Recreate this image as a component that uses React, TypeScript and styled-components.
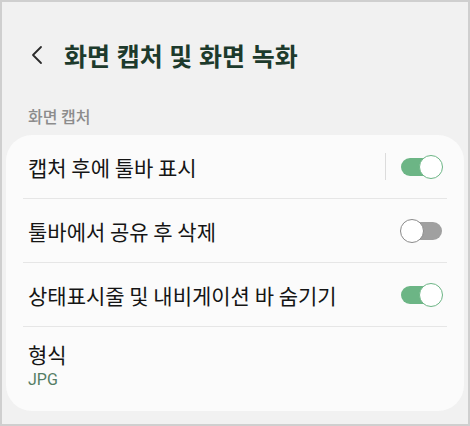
import { type FC } from "react";
import styled, { createGlobalStyle } from "styled-components";

const GlobalStyle = createGlobalStyle`
  html, body {
    margin: 0;
    padding: 0;
    background: #f1f1f1;
  }
  * {
    box-sizing: border-box;
  }
`;

type SwitchRow = {
  label: string;
  on: boolean;
  divider?: boolean;
};

const rows: SwitchRow[] = [
  { label: "캡처 후에 툴바 표시", on: true, divider: true },
  { label: "툴바에서 공유 후 삭제", on: false },
  { label: "상태표시줄 및 내비게이션 바 숨기기", on: true },
];

const App: FC = () => {
  return (
    <>
      <GlobalStyle />
      <Frame>
        <Header>
          <BackButton aria-label="뒤로">
            <svg width="14" height="20" viewBox="0 0 14 20">
              <path
                d="M11 2 L3 10 L11 18"
                fill="none"
                stroke="#2a2a2a"
                strokeWidth="1.8"
                strokeLinecap="round"
                strokeLinejoin="round"
              />
            </svg>
          </BackButton>
          <Title>화면 캡처 및 화면 녹화</Title>
        </Header>

        <SectionLabel>화면 캡처</SectionLabel>

        <Card>
          {rows.map((row) => (
            <Row key={row.label}>
              <RowLabel>{row.label}</RowLabel>
              {row.divider && <VerticalRule />}
              <Toggle $on={row.on}>
                <Knob $on={row.on} />
              </Toggle>
            </Row>
          ))}
          <InfoRow>
            <InfoTitle>형식</InfoTitle>
            <SubValue>JPG</SubValue>
          </InfoRow>
        </Card>
      </Frame>
    </>
  );
};

export default App;

const Frame = styled.div`
  width: 470px;
  height: 426px;
  border: 2px solid #cfcfcf;
  background: #f1f1f1;
  font-family: "Roboto", "Noto Sans CJK KR", sans-serif;
  padding: 0 4px;
  display: flex;
  flex-direction: column;
  overflow: hidden;
`;

const Header = styled.div`
  display: flex;
  align-items: center;
  height: 52px;
  margin-top: 27px;
  padding-left: 24px;
  gap: 20px;
`;

const BackButton = styled.div`
  display: flex;
  align-items: center;
  justify-content: center;
  width: 14px;
  height: 20px;
`;

const Title = styled.h1`
  margin: 0;
  font-family: "Noto Sans CJK KR", sans-serif;
  font-size: 25px;
  font-weight: 700;
  color: #1d3a2c;
  word-spacing: 1px;
`;

const SectionLabel = styled.div`
  margin-top: 25px;
  padding-left: 22px;
  height: 20px;
  line-height: 20px;
  font-family: "Noto Sans CJK KR", sans-serif;
  font-size: 16px;
  font-weight: 500;
  color: #8c8c8c;
`;

const Card = styled.div`
  margin-top: 9px;
  background: #fbfbfb;
  border-radius: 26px;
  padding: 0 17px;
  display: flex;
  flex-direction: column;
`;

const Row = styled.div`
  display: flex;
  align-items: center;
  height: 64px;
  padding: 0 4px 0 5px;
  border-bottom: 1px solid #e6e6e6;
`;

const RowLabel = styled.div`
  flex: 1;
  font-family: "Noto Sans CJK KR", sans-serif;
  font-size: 21px;
  color: #151515;
  line-height: 28px;
`;

const VerticalRule = styled.div`
  width: 1px;
  height: 27px;
  background: #dcdcdc;
  margin-right: 14px;
`;

const Toggle = styled.div<{ $on: boolean }>`
  position: relative;
  width: 43px;
  height: 24px;
  display: flex;
  align-items: center;
  justify-content: ${(p) => (p.$on ? "flex-end" : "flex-start")};

  &::before {
    content: "";
    position: absolute;
    left: 1px;
    right: 1px;
    top: 3px;
    bottom: 3px;
    border-radius: 9px;
    background: ${(p) => (p.$on ? "#6cb585" : "#a0a0a0")};
  }
`;

const Knob = styled.div<{ $on: boolean }>`
  position: relative;
  width: 24px;
  height: 24px;
  border-radius: 50%;
  background: #ffffff;
  border: 1.5px solid ${(p) => (p.$on ? "#6cb585" : "#8a8a8a")};
`;

const InfoRow = styled.div`
  display: flex;
  flex-direction: column;
  justify-content: center;
  height: 84px;
  padding: 0 5px 6px;
`;

const InfoTitle = styled.div`
  font-family: "Noto Sans CJK KR", sans-serif;
  font-size: 21px;
  color: #151515;
  line-height: 28px;
`;

const SubValue = styled.div`
  font-family: "Roboto", sans-serif;
  font-size: 16px;
  color: #557d65;
  line-height: 24px;
`;
